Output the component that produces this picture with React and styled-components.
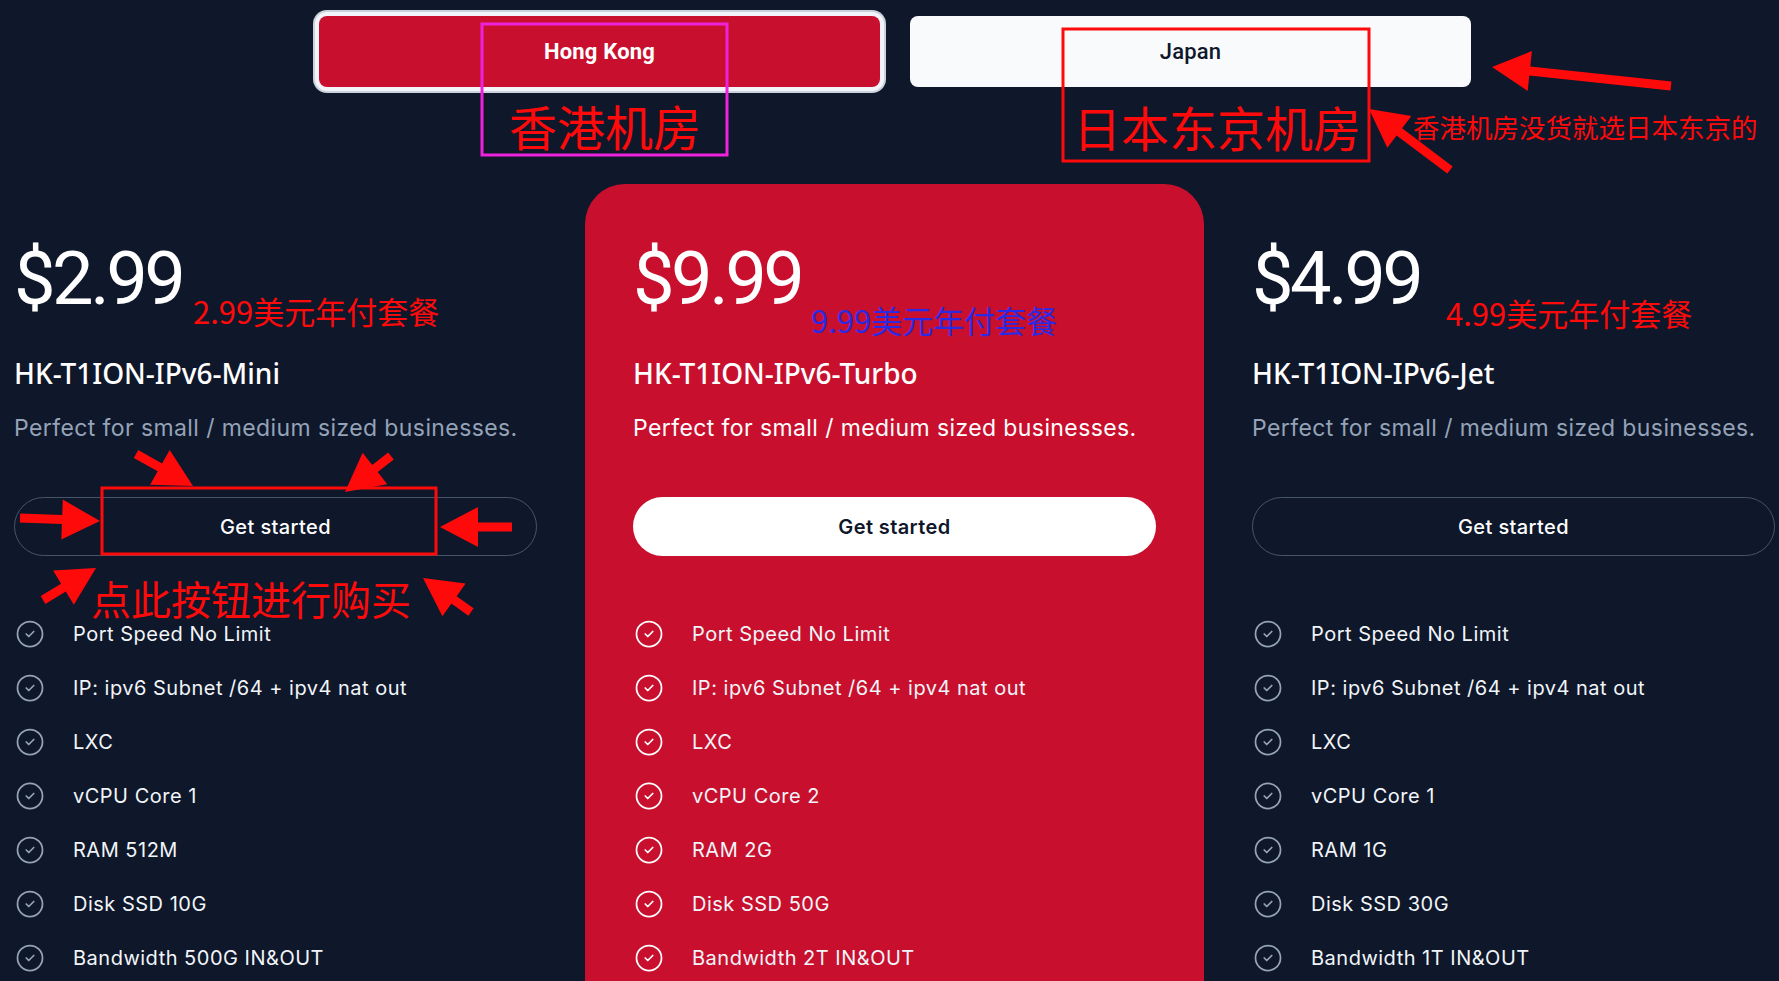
import React from "react";
import styled, { createGlobalStyle } from "styled-components";
import { CircleCheck } from "lucide-react";

const GlobalStyle = createGlobalStyle`
  html, body {
    margin: 0;
    padding: 0;
    background: #0f172a;
    overflow: hidden;
  }
  body {
    font-family: Inter, "Noto Sans", sans-serif;
    color: #fff;
  }
`;

const Page = styled.div`
  position: relative;
  width: 1779px;
  height: 981px;
  overflow: hidden;
  background: #0f172a;
`;

const Tabs = styled.div`
  display: flex;
  justify-content: center;
  gap: 30px;
  padding: 16px 0 0 11px;
`;

const Tab = styled.button`
  width: 561px;
  height: 71px;
  border: 0;
  border-radius: 8px;
  cursor: pointer;
  font-family: Roboto, "Liberation Sans", sans-serif;
  font-size: 22px;
  letter-spacing: 0.2px;
  ${(p) =>
    p.$active
      ? `
    background: #c8102e;
    color: #fff;
    font-weight: 700;
    box-shadow: 0 0 0 4px #f1f5f9, 0 0 0 6px #cbd2db;
  `
      : `
    background: #f8fafc;
    color: #0f172a;
    font-weight: 500;
  `}
`;

const Plans = styled.div`
  display: grid;
  grid-template-columns: repeat(3, 619px);
  margin: 97px 0 0 -34px;
`;

const Card = styled.div`
  padding: 58px 48px 0;
  min-height: 820px;
  border-radius: 40px;
  background: ${(p) => (p.$featured ? "#c8102e" : "transparent")};
`;

const PriceRow = styled.div`
  position: relative;
  height: 74px;
`;

const Price = styled.div`
  font-family: Roboto, "Noto Sans", sans-serif;
  font-weight: 400;
  font-size: 74px;
  line-height: 1;
  letter-spacing: -3.5px;
  color: #fff;
`;

const Note = styled.span`
  position: absolute;
  left: ${(p) => p.$x}px;
  top: ${(p) => p.$y}px;
  font-family: "Noto Sans CJK SC", sans-serif;
  font-size: 31px;
  line-height: 1;
  color: ${(p) => p.$color};
  white-space: nowrap;
`;

const Title = styled.h3`
  margin: 39px 0 0;
  font-family: "Noto Sans", sans-serif;
  font-weight: 500;
  font-size: 28px;
  line-height: 36px;
  color: #fff;
`;

const Desc = styled.p`
  margin: 22px 0 0;
  font-size: 23px;
  letter-spacing: 0.4px;
  line-height: 30px;
  color: ${(p) => (p.$featured ? "#fff" : "#94a3b8")};
`;

const StartButton = styled.button`
  display: block;
  width: 100%;
  height: 59px;
  margin-top: 54px;
  border-radius: 999px;
  font-family: Inter, sans-serif;
  font-size: 20px;
  letter-spacing: 0.4px;
  cursor: pointer;
  ${(p) =>
    p.$featured
      ? `
    background: #fff;
    color: #0f172a;
    border: 0;
    font-weight: 600;
  `
      : `
    background: transparent;
    color: #fff;
    border: 1px solid #475569;
    font-weight: 500;
  `}
`;

const Features = styled.ul`
  list-style: none;
  margin: 63px 0 0;
  padding: 0;
  display: flex;
  flex-direction: column;
  gap: 24px;
`;

const Feature = styled.li`
  display: flex;
  align-items: center;
  gap: 28px;
  height: 30px;
  font-size: 20px;
  letter-spacing: 0.5px;
  color: #f1f5f9;
  svg {
    flex-shrink: 0;
    margin-left: 1px;
    color: ${(p) => (p.$featured ? "#fff" : "#94a3b8")};
  }
`;

const Overlay = styled.div`
  position: absolute;
  inset: 0;
  pointer-events: none;
`;

const Marks = styled.svg`
  position: absolute;
  top: 0;
  left: 0;
`;

const Label = styled.span`
  position: absolute;
  left: ${(p) => p.$x}px;
  top: ${(p) => p.$y}px;
  font-family: "Noto Sans CJK SC", sans-serif;
  font-size: ${(p) => p.$size}px;
  line-height: 1;
  color: #ff0a0a;
  white-space: nowrap;
`;

const plans = [
  {
    price: "$2.99",
    name: "HK-T1ION-IPv6-Mini",
    note: { text: "2.99美元年付套餐", x: 179, y: 53, color: "#ff0a0a" },
    features: ["Port Speed No Limit", "IP: ipv6 Subnet /64 + ipv4 nat out", "LXC", "vCPU Core 1", "RAM 512M", "Disk SSD 10G", "Bandwidth 500G IN&OUT"],
  },
  {
    price: "$9.99",
    name: "HK-T1ION-IPv6-Turbo",
    featured: true,
    note: { text: "9.99美元年付套餐", x: 178, y: 62, color: "#2a2ae6" },
    features: ["Port Speed No Limit", "IP: ipv6 Subnet /64 + ipv4 nat out", "LXC", "vCPU Core 2", "RAM 2G", "Disk SSD 50G", "Bandwidth 2T IN&OUT"],
  },
  {
    price: "$4.99",
    name: "HK-T1ION-IPv6-Jet",
    note: { text: "4.99美元年付套餐", x: 194, y: 55, color: "#ff0a0a" },
    features: ["Port Speed No Limit", "IP: ipv6 Subnet /64 + ipv4 nat out", "LXC", "vCPU Core 1", "RAM 1G", "Disk SSD 30G", "Bandwidth 1T IN&OUT"],
  },
];

function arrowPoints([x1, y1], [x2, y2], shaft = 9, head = 38, width = 40) {
  const dx = x2 - x1;
  const dy = y2 - y1;
  const len = Math.hypot(dx, dy);
  const ux = dx / len;
  const uy = dy / len;
  const nx = -uy;
  const ny = ux;
  const bx = x2 - ux * head;
  const by = y2 - uy * head;
  const pts = [
    [x1 + (nx * shaft) / 2, y1 + (ny * shaft) / 2],
    [bx + (nx * shaft) / 2, by + (ny * shaft) / 2],
    [bx + (nx * width) / 2, by + (ny * width) / 2],
    [x2, y2],
    [bx - (nx * width) / 2, by - (ny * width) / 2],
    [bx - (nx * shaft) / 2, by - (ny * shaft) / 2],
    [x1 - (nx * shaft) / 2, y1 - (ny * shaft) / 2],
  ];
  return pts.map((p) => p.map((v) => v.toFixed(1)).join(",")).join(" ");
}

const arrows = [
  [[1671, 86], [1492, 67]],
  [[1450, 170], [1369, 109]],
  [[136, 454], [193, 486]],
  [[391, 456], [345, 492]],
  [[20, 518], [100, 521]],
  [[512, 527], [440, 527]],
  [[43, 600], [96, 568]],
  [[471, 612], [423, 578]],
];

export default function App() {
  return (
    <Page>
      <GlobalStyle />
      <Tabs>
        <Tab $active>Hong Kong</Tab>
        <Tab>Japan</Tab>
      </Tabs>

      <Plans>
        {plans.map((plan) => (
          <Card key={plan.name} $featured={plan.featured}>
            <PriceRow>
              <Price>{plan.price}</Price>
              <Note $x={plan.note.x} $y={plan.note.y} $color={plan.note.color}>
                {plan.note.text}
              </Note>
            </PriceRow>
            <Title>{plan.name}</Title>
            <Desc $featured={plan.featured}>Perfect for small / medium sized businesses.</Desc>
            <StartButton $featured={plan.featured}>Get started</StartButton>
            <Features>
              {plan.features.map((f) => (
                <Feature key={f} $featured={plan.featured}>
                  <CircleCheck size={30} strokeWidth={1.4} />
                  {f}
                </Feature>
              ))}
            </Features>
          </Card>
        ))}
      </Plans>

      <Overlay>
        <Marks width="1779" height="981" viewBox="0 0 1779 981">
          <rect x="482" y="24" width="245" height="131" fill="none" stroke="#ee22dd" strokeWidth="3" />
          <rect x="1063" y="29" width="306" height="132" fill="none" stroke="#ff0a0a" strokeWidth="3" />
          <rect x="102" y="488" width="334" height="66" fill="none" stroke="#ff0a0a" strokeWidth="3" />
          {arrows.map((a, i) => (
            <polygon key={i} points={arrowPoints(a[0], a[1])} fill="#ff0a0a" />
          ))}
        </Marks>
        <Label $x={509} $y={101} $size={48}>香港机房</Label>
        <Label $x={1073} $y={102} $size={48}>日本东京机房</Label>
        <Label $x={1413} $y={114} $size={26.5}>香港机房没货就选日本东京的</Label>
        <Label $x={91} $y={578} $size={40}>点此按钮进行购买</Label>
      </Overlay>
    </Page>
  );
}
